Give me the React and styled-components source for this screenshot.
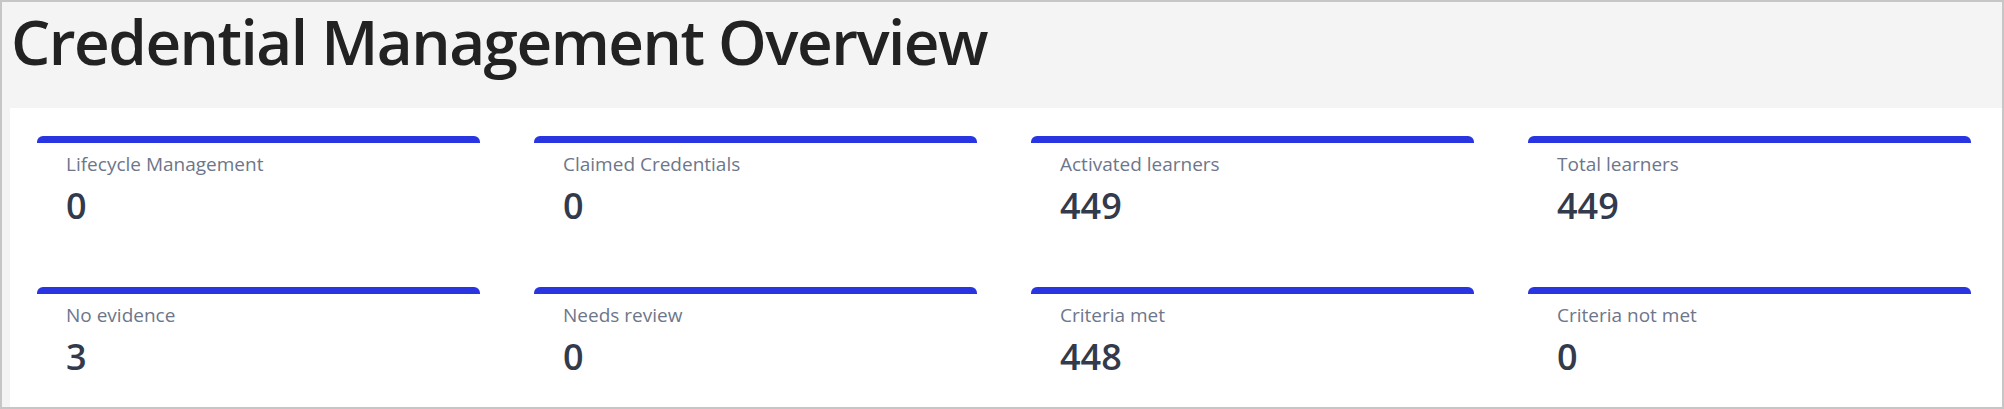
import styled, { createGlobalStyle } from "styled-components"

const GlobalStyle = createGlobalStyle`
  * { box-sizing: border-box; }
  html, body { margin: 0; padding: 0; background: #ffffff; }
  body { font-family: "Open Sans", "Noto Sans", sans-serif; }
`

const Page = styled.div`
  width: 2004px;
  height: 409px;
  border: 2px solid #c6c6c6;
  background: #f4f4f4;
  padding: 0 0 0 8px;
  display: flex;
  flex-direction: column;
`

const Header = styled.header`
  height: 106px;
  padding: 0 0 0 1px;
`

const Title = styled.h1`
  margin: 0;
  font-size: 62px;
  line-height: 78px;
  font-weight: 600;
  color: #222222;
  letter-spacing: -1.5px;
  white-space: nowrap;
`

const Panel = styled.section`
  flex: 1;
  background: #ffffff;
  padding: 28px 28px 0 27px;
  display: grid;
  grid-template-columns: repeat(4, 443px);
  column-gap: 54px;
  row-gap: 59px;
  align-content: start;
`

const Card = styled.div`
  display: flex;
  flex-direction: column;
`

const Bar = styled.div`
  height: 7px;
  background: #2a35e2;
  border-radius: 6px 6px 0 0;
`

const Body = styled.div`
  padding: 0 29px;
`

const Label = styled.div`
  margin-top: 9px;
  font-size: 19px;
  line-height: 24px;
  color: #6d768a;
`

const Value = styled.div`
  margin-top: 8px;
  font-size: 36px;
  line-height: 44px;
  font-weight: 600;
  color: #323a4c;
`

const stats = [
  { label: "Lifecycle Management", value: 0 },
  { label: "Claimed Credentials", value: 0 },
  { label: "Activated learners", value: 449 },
  { label: "Total learners", value: 449 },
  { label: "No evidence", value: 3 },
  { label: "Needs review", value: 0 },
  { label: "Criteria met", value: 448 },
  { label: "Criteria not met", value: 0 },
]

const App = () => {
  return (
    <>
      <GlobalStyle />
      <Page>
        <Header>
          <Title>Credential Management Overview</Title>
        </Header>
        <Panel>
          {stats.map((s) => (
            <Card key={s.label}>
              <Bar />
              <Body>
                <Label>{s.label}</Label>
                <Value>{s.value}</Value>
              </Body>
            </Card>
          ))}
        </Panel>
      </Page>
    </>
  )
}

export default App
